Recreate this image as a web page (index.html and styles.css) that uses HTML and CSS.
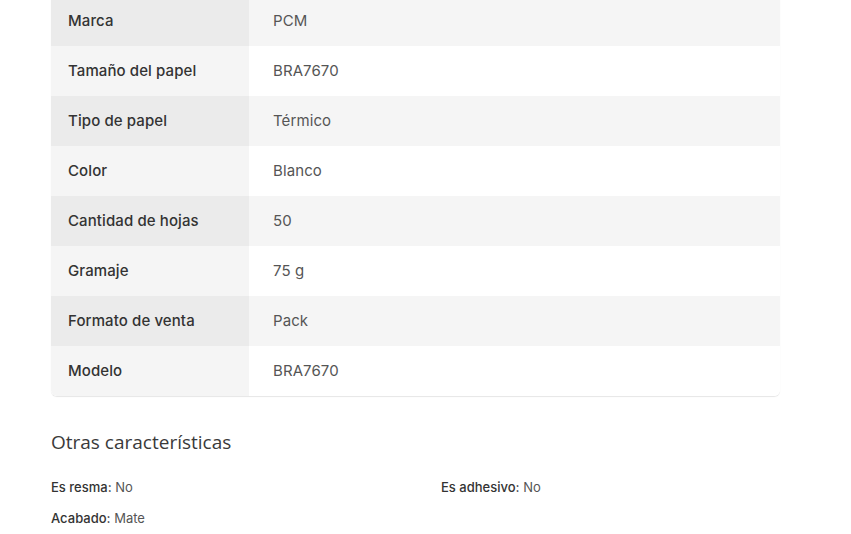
FILE: index.html
```html
<!DOCTYPE html>
<html lang="es">
<head>
<meta charset="utf-8">
<link rel="stylesheet" href="styles.css">
</head>
<body>
<div class="page">
  <div class="specs">
    <div class="row odd"><div class="label">Marca</div><div class="value">PCM</div></div>
    <div class="row"><div class="label">Tamaño del papel</div><div class="value">BRA7670</div></div>
    <div class="row odd"><div class="label">Tipo de papel</div><div class="value">Térmico</div></div>
    <div class="row"><div class="label">Color</div><div class="value">Blanco</div></div>
    <div class="row odd"><div class="label">Cantidad de hojas</div><div class="value">50</div></div>
    <div class="row"><div class="label">Gramaje</div><div class="value">75 g</div></div>
    <div class="row odd"><div class="label">Formato de venta</div><div class="value">Pack</div></div>
    <div class="row"><div class="label">Modelo</div><div class="value">BRA7670</div></div>
  </div>
  <h2 class="title">Otras características</h2>
  <div class="others">
    <p class="item"><span class="k">Es resma:</span> No</p>
    <p class="item"><span class="k">Es adhesivo:</span> No</p>
    <p class="item"><span class="k">Acabado:</span> Mate</p>
  </div>
</div>
</body>
</html>
```
FILE: styles.css
```css
html, body { margin: 0; padding: 0; background: #fff; }
body { font-family: "Inter", "Liberation Sans", sans-serif; color: #333; overflow: hidden; width: 851px; height: 534px; }
.page { padding: 0 71px 0 51px; margin-top: -4px; }
.specs {
  border-radius: 0 0 6px 6px;
  overflow: hidden;
  box-shadow: 0 1px 1px rgba(0,0,0,0.10);
}
.row { display: flex; height: 50px; align-items: stretch; background: #fff; }
.row .label { width: 198px; flex: none; background: #f5f5f5; padding-left: 17px; box-sizing: border-box; display: flex; align-items: center; padding-bottom: 1px; font-weight: 500; font-size: 15px; letter-spacing: 0.1px; color: #333; }
.row .value { flex: 1; padding-left: 24px; display: flex; align-items: center; padding-bottom: 1px; font-size: 15px; letter-spacing: 0.1px; color: #555; }
.row.odd { background: #f5f5f5; }
.row.odd .label { background: #ebebeb; }
.title { margin: 34px 0 0; font-family: "Open Sans", sans-serif; font-size: 19px; font-weight: 400; color: #3a3a3a; line-height: 24px; }
.others { display: grid; grid-template-columns: 390px 1fr; row-gap: 9px; margin-top: 22px; }
.item { margin: 0; font-size: 13px; line-height: 22px; color: #555; }
.item .k { font-weight: 500; color: #333; }
```
